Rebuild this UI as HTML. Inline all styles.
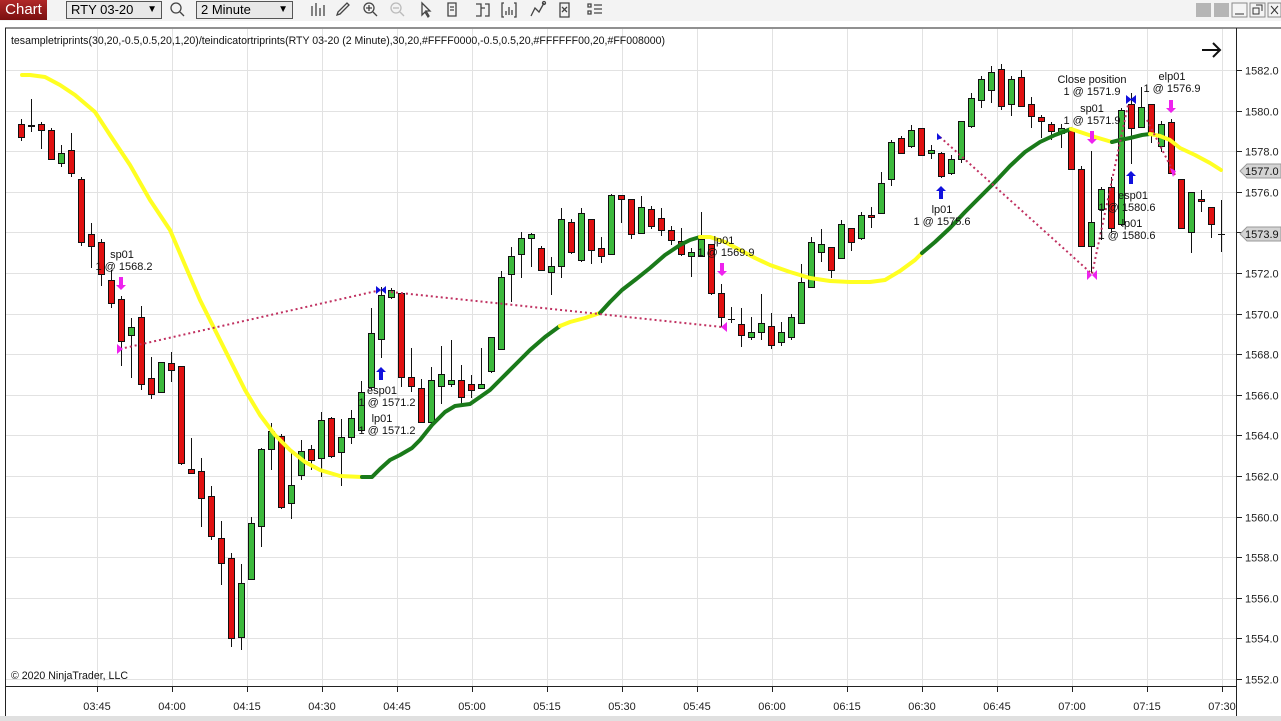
<!DOCTYPE html>
<html><head><meta charset="utf-8"><style>
html,body{margin:0;padding:0;width:1281px;height:721px;overflow:hidden;background:#fff;font-family:"Liberation Sans",Arial,sans-serif}
.tb{position:absolute;left:0;top:0;width:1281px;height:21px;background:#f3f3f3}
.chart{position:absolute;left:0;top:0;width:47px;height:20px;background:linear-gradient(#b02828,#7a1010);color:#fff;font-size:15px;line-height:20px;text-align:center}
.dd{position:absolute;top:1px;height:16px;border:1px solid #555;background:#e8e8e8;font-size:13px;line-height:16px;padding-left:4px;box-sizing:border-box}
.dd span{position:absolute;right:4px;top:0;font-size:10px}
</style></head><body>
<div class="tb"></div>
<div class="chart">Chart</div>
<div class="dd" style="left:66px;width:96px;height:18px">RTY 03-20<span>▼</span></div>
<div class="dd" style="left:196px;width:97px;height:18px">2 Minute<span>▼</span></div>
<svg style="position:absolute;left:0;top:0" width="1281" height="721" xmlns="http://www.w3.org/2000/svg">
<g stroke="#444" fill="none" stroke-width="1.3">
<circle cx="176" cy="8" r="5"/><line x1="180" y1="12" x2="184" y2="16"/>
<path d="M312 16V6M316 16V3M320 16V8M324 16V5"/>
<path d="M337 15l3-1 9-9-2-2-9 9z"/>
<circle cx="369" cy="8" r="5"/><line x1="373" y1="12" x2="377" y2="16"/><path d="M366 8h6M369 5v6"/>
<g stroke="#bbb"><circle cx="396" cy="8" r="5"/><line x1="400" y1="12" x2="404" y2="16"/><path d="M393 8h6"/></g>
<path d="M422 3v12l3-3 3 5 1-1-3-5h4z"/>
<path d="M448 3h8v13h-8zM450 7h4M450 10h4"/>
<path d="M476 4h5v12h-5M485 4h4v12h-4M481 8h4"/>
<path d="M504 3h-2v14h2M514 3h2v14h-2M506 15v-4M509 15v-8M512 15v-5"/>
<path d="M531 16l4-8 4 4 5-9"/><circle cx="544" cy="3" r="1.5"/>
<path d="M560 3h9v14h-9zM562 7l5 5M562 12l5-5"/>
<path d="M588 4h3v3h-3zM588 11h3v3h-3zM594 5h8M594 9h8M594 13h8"/>
</g>
<rect x="1196" y="3" width="15" height="14" fill="#b5b5b5"/><rect x="1214" y="3" width="15" height="14" fill="#b5b5b5"/>
<rect x="1232" y="3" width="15" height="14" fill="#f4f4f4" stroke="#888"/><path d="M1235 14h9" stroke="#333"/>
<rect x="1250" y="3" width="15" height="14" fill="#f4f4f4" stroke="#888"/><path d="M1253 8h6v6h-6zM1256 5h6v6" stroke="#333" fill="none"/>
<rect x="1268" y="3" width="13" height="14" fill="#f4f4f4" stroke="#888"/><path d="M1271 6l7 8M1278 6l-7 8" stroke="#333"/>
<rect x="5" y="28" width="1276" height="688" fill="#fff"/>
<line x1="5" y1="28" x2="1281" y2="28" stroke="#222"/>
<line x1="5.5" y1="28" x2="5.5" y2="716" stroke="#222"/>
<g id="grid" stroke="#e2e2e2" stroke-width="1"></g>
<line x1="5" y1="686.5" x2="1236" y2="686.5" stroke="#222"/>
<line x1="1236.5" y1="28" x2="1236.5" y2="716" stroke="#222"/>
<rect x="0" y="716" width="1281" height="5" fill="#e0e0e0"/>
<g id="axis" font-size="11" fill="#222"></g>
<g id="cd"></g>
<g fill="none" stroke-width="4" stroke-linecap="round" stroke-linejoin="round">
<polyline stroke="#ffff22" points="22,75 30,75 45,77 60,85 75,95 95,112 110,135 130,165 150,200 170,230 185,265 200,300 215,330 230,360 245,390 260,415 275,435 290,450 305,462 320,470 340,476 362,477"/>
<polyline stroke="#1a7a1a" points="362,477 372,477 380,469 390,460 400,455 412,448 420,440 432,425 445,412 455,406 470,404 480,397 490,390 500,380 515,365 530,350 545,337 560,326"/>
<polyline stroke="#ffff22" points="560,326 570,322 585,318 600,313"/>
<polyline stroke="#1a7a1a" points="600,313 610,302 622,290 635,280 650,268 665,255 680,245 690,240 700,237"/>
<polyline stroke="#ffff22" points="700,237 710,237 725,242 740,250 755,258 770,265 790,272 810,278 830,281 850,282 870,282 885,280 900,271 915,260 922,253"/>
<polyline stroke="#1a7a1a" points="922,253 935,242 950,228 965,212 980,197 995,182 1010,166 1025,152 1040,142 1055,135 1071,129"/>
<polyline stroke="#ffff22" points="1071,129 1080,132 1095,137 1112,142"/>
<polyline stroke="#1a7a1a" points="1112,142 1120,140 1130,138 1142,135 1150,134"/>
<polyline stroke="#ffff22" points="1150,134 1160,136 1170,140 1180,148 1195,155 1210,163 1221,170"/>
</g>
<g stroke="#c03060" stroke-width="2" stroke-dasharray="2,3" fill="none">
<path d="M120 349L381 290M391 292L722 327M940 137L1092 274L1128 105M1147 120L1175 175"/>
</g>
<g fill="#ee22ee">
<path d="M119 277h4v8h3l-5 5-5-5h3z"/>
<path d="M720 263h4v8h3l-5 5-5-5h3z"/>
<path d="M1090 131h4v8h3l-5 5-5-5h3z"/>
<path d="M1169 100h4v8h3l-5 5-5-5h3z"/>
<path d="M117 344l6 5-6 5z"/><path d="M727 322l-6 5 6 5z"/>
<path d="M1087 270l5 5 5-5v10l-5-5-5 5z"/>
<path d="M1170 168l6 3-3 6z"/>
</g>
<g fill="#1010dd">
<path d="M379 380h4v-8h3l-5-5-5 5h3z"/>
<path d="M939 199h4v-8h3l-5-5-5 5h3z"/>
<path d="M1129 184h4v-8h3l-5-5-5 5h3z"/>
<path d="M376 286l5 4 5-4v8l-5-4-5 4z"/>
<path d="M937 133l5 5-5 2z"/>
<path d="M1126 95l5 4 5-4v9l-5-4-5 4z"/>
</g>
<g font-size="11" fill="#111" text-anchor="middle">
<text x="122" y="258">sp01</text><text x="124" y="270">1 @ 1568.2</text>
<text x="382" y="394">esp01</text><text x="387" y="406">1 @ 1571.2</text>
<text x="382" y="422">lp01</text><text x="387" y="434">1 @ 1571.2</text>
<text x="724" y="244">lp01</text><text x="726" y="256">1 @ 1569.9</text>
<text x="942" y="213">lp01</text><text x="942" y="225">1 @ 1575.6</text>
<text x="1092" y="83">Close position</text><text x="1092" y="95">1 @ 1571.9</text>
<text x="1092" y="112">sp01</text><text x="1092" y="124">1 @ 1571.9</text>
<text x="1172" y="80">elp01</text><text x="1172" y="92">1 @ 1576.9</text>
<text x="1133" y="199">esp01</text><text x="1127" y="211">1 @ 1580.6</text>
<text x="1132" y="227">lp01</text><text x="1127" y="239">1 @ 1580.6</text>
</g>
<text x="11" y="44" font-size="11" fill="#111" textLength="654" lengthAdjust="spacingAndGlyphs">tesampletriprints(30,20,-0.5,0.5,20,1,20)/teindicatortriprints(RTY 03-20 (2 Minute),30,20,#FFFF0000,-0.5,0.5,20,#FFFFFF00,20,#FF008000)</text>
<text x="11" y="679" font-size="11" fill="#111" textLength="117" lengthAdjust="spacingAndGlyphs">© 2020 NinjaTrader, LLC</text>
<path d="M1202 50h18M1213 43l7 7-7 7" stroke="#111" stroke-width="2" fill="none"/>
<path d="M1240 171l7-7h34v14h-34z" fill="#d4d4d4" stroke="#999"/><text x="1245" y="175" font-size="11" fill="#111">1577.0</text>
<path d="M1240 234l7-7h34v14h-34z" fill="#d4d4d4" stroke="#999"/><text x="1245" y="238" font-size="11" fill="#111">1573.9</text>
</svg>
<script>
var NS="http://www.w3.org/2000/svg";
function el(t,a,p){var e=document.createElementNS(NS,t);for(var k in a)e.setAttribute(k,a[k]);document.getElementById(p).appendChild(e);return e;}
var xs=[97,172,247,322,397,472,547,622,697,772,847,922,997,1072,1147,1222];
var tl=["03:45","04:00","04:15","04:30","04:45","05:00","05:15","05:30","05:45","06:00","06:15","06:30","06:45","07:00","07:15","07:30"];
for(var i=0;i<xs.length;i++){el("line",{x1:xs[i]+.5,y1:29,x2:xs[i]+.5,y2:686},"grid");el("line",{x1:xs[i]+.5,y1:687,x2:xs[i]+.5,y2:692,stroke:"#222"},"axis");var t=el("text",{x:xs[i],y:710,"text-anchor":"middle"},"axis");t.textContent=tl[i];}
for(var p=0;p<=15;p++){var y=Math.round(70+p*40.6)+.5;el("line",{x1:6,y1:y,x2:1236,y2:y},"grid");el("line",{x1:1237,y1:y,x2:1242,y2:y,stroke:"#222"},"axis");var t=el("text",{x:1245,y:y+4},"axis");t.textContent=(1582-2*p).toFixed(1);}
var C=[[21,124,137,119,141],[31,126,125,99,132],[41,124,130,122,149],[51,130,159,128,160],[61,163,153,145,167],[71,150,173,133,177],[81,179,242,177,246],[91,234,246,223,268],[101,242,274,239,286],[111,280,303,270,308],[121,299,341,296,366],[131,335,327,318,378],[141,317,384,306,390],[151,378,394,357,399],[161,392,362,362,392],[171,363,370,352,382],[181,366,463,366,465],[191,469,473,438,474],[201,471,498,458,527],[211,496,536,486,540],[221,538,563,521,585],[231,558,638,553,647],[241,637,583,564,650],[251,579,523,517,580],[261,526,449,448,547],[271,449,431,423,470],[281,436,507,434,509],[291,503,485,452,519],[301,475,451,440,480],[311,449,460,445,470],[321,458,420,412,477],[331,418,456,417,458],[341,452,437,419,486],[351,437,418,410,444],[361,430,392,381,432],[371,387,333,308,390],[381,339,295,287,358],[391,297,290,288,299],[401,293,377,293,387],[411,377,386,348,392],[421,388,422,379,423],[431,422,380,367,424],[441,386,374,346,404],[451,384,380,340,387],[461,380,397,365,405],[471,384,390,375,398],[481,388,384,348,389],[491,371,337,337,373],[501,349,277,271,350],[511,274,256,247,302],[521,254,238,232,278],[531,238,234,233,267],[541,248,270,246,271],[551,272,266,257,295],[561,266,219,208,278],[571,222,252,219,254],[581,260,213,208,262],[591,219,250,219,264],[601,248,256,237,263],[611,254,195,194,255],[621,195,199,195,223],[631,199,234,199,239],[641,233,207,196,234],[651,209,226,206,229],[661,218,230,208,236],[671,230,240,226,245],[681,241,254,228,256],[691,256,252,248,277],[701,256,239,212,257],[711,244,293,244,295],[721,293,317,284,327],[731,319,319,307,323],[741,324,335,308,347],[751,337,332,317,340],[761,332,323,294,340],[771,326,345,313,349],[781,342,332,322,346],[791,337,317,314,340],[801,323,282,264,324],[811,287,242,237,288],[821,252,244,229,262],[831,247,270,247,278],[841,258,224,220,259],[851,228,242,228,251],[861,238,215,212,240],[871,215,217,207,228],[881,213,183,172,214],[891,179,142,140,186],[901,138,153,136,154],[911,146,130,125,148],[921,128,155,128,156],[931,153,150,145,159],[941,153,176,152,178],[951,173,159,155,175],[961,159,121,121,163],[971,126,98,93,128],[981,100,79,76,108],[991,90,72,66,103],[1001,69,106,64,110],[1011,104,79,76,116],[1021,77,106,70,107],[1031,104,116,97,128],[1041,117,121,115,138],[1051,124,131,122,140],[1061,133,128,124,148],[1071,129,169,128,170],[1081,169,246,166,247],[1091,246,222,151,273],[1101,209,189,187,240],[1111,187,228,177,233],[1121,224,110,108,226],[1131,104,128,93,164],[1141,127,107,87,128],[1151,104,133,104,143],[1161,146,124,121,152],[1171,122,173,119,174],[1181,179,228,179,229],[1191,232,192,192,253],[1201,199,201,190,212],[1211,207,224,207,238],[1221,234,234,200,252]];
C.forEach(function(c){var x=c[0],up=c[2]<c[1];el("line",{x1:x+.5,y1:c[3],x2:x+.5,y2:c[4],stroke:"#111"},"cd");var t=Math.min(c[1],c[2]),h=Math.max(1,Math.abs(c[1]-c[2]));if(Math.abs(c[1]-c[2])<1){el("line",{x1:x-3,y1:t+.5,x2:x+4,y2:t+.5,stroke:"#111"},"cd");}else el("rect",{x:x-2.5,y:t+.5,width:6,height:h,fill:up?"#3cb93c":"#e01010",stroke:"#111","stroke-width":1},"cd");});
</script>
</body></html>
